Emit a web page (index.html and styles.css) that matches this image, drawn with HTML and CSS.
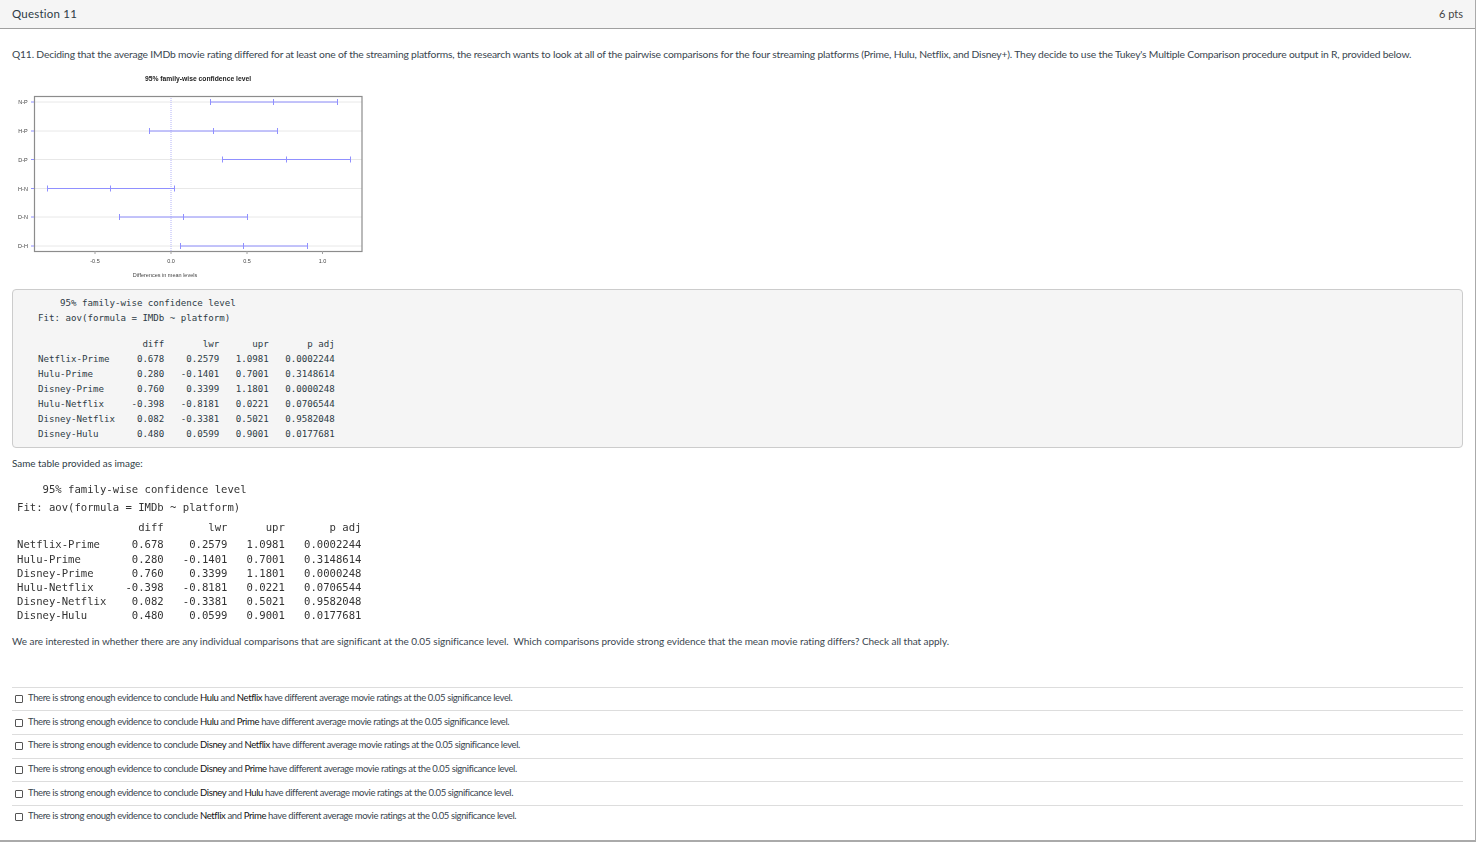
FILE: index.html
```html
<!DOCTYPE html>
<html lang="en">
<head>
<meta charset="utf-8">
<title>Question 11</title>
<link rel="stylesheet" href="styles.css">
</head>
<body>
<main class="question">
  <header class="question-header">
    <span class="question-name">Question 11</span>
    <span class="question-points">6 pts</span>
  </header>
  <section class="question-body">
    <p class="prompt">Q11. Deciding that the average IMDb movie rating differed for at least one of the streaming platforms, the research wants to look at all of the pairwise comparisons for the four streaming platforms (Prime, Hulu, Netflix, and Disney+). They decide to use the Tukey's Multiple Comparison procedure output in R, provided below.</p>
    <svg class="chart" viewBox="12 66 360 216" width="360" height="216" role="img" aria-label="95% family-wise confidence level">
      <text class="chart-title" x="198" y="81" text-anchor="middle">95% family-wise confidence level</text>
      <path class="grid" d="M34 102H362M34 131H362M34 159.500H362M34 188.500H362M34 217H362M34 246H362"/>
      <path class="zero" d="M171 96V251"/>
      <rect class="frame" x="34.500" y="96.500" width="327.500" height="155"/>
      <path class="interval" d="M31 102H34M31 131H34M31 159.500H34M31 188.500H34M31 217H34M31 246H34"/>
      <path class="interval" d="M210.500 102H337.500M210.500 99V105M273.500 99V105M337.500 99V105"/>
      <path class="interval" d="M149.500 131H277.500M149.500 128V134M213.500 128V134M277.500 128V134"/>
      <path class="interval" d="M222.500 159.500H350.500M222.500 156.500V162.500M286.500 156.500V162.500M350.500 156.500V162.500"/>
      <path class="interval" d="M47.500 188.500H174.500M47.500 185.500V191.500M110.500 185.500V191.500M174.500 185.500V191.500"/>
      <path class="interval" d="M119.500 217H247.500M119.500 214V220M183.500 214V220M247.500 214V220"/>
      <path class="interval" d="M180.500 246H307.500M180.500 243V249M243.500 243V249M307.500 243V249"/>
      <path class="tick" d="M95 251V254M171 251V254M247 251V254M322.500 251V254"/>
      <g class="chart-label">
        <text x="23" y="104" text-anchor="middle">N-P</text>
        <text x="23" y="133" text-anchor="middle">H-P</text>
        <text x="23" y="162" text-anchor="middle">D-P</text>
        <text x="23" y="191" text-anchor="middle">H-N</text>
        <text x="23" y="219" text-anchor="middle">D-N</text>
        <text x="23" y="248" text-anchor="middle">D-H</text>
        <text x="95" y="263" text-anchor="middle">-0.5</text>
        <text x="171" y="263" text-anchor="middle">0.0</text>
        <text x="247" y="263" text-anchor="middle">0.5</text>
        <text x="322.500" y="263" text-anchor="middle">1.0</text>
        <text x="165" y="277" text-anchor="middle">Differences in mean levels</text>
      </g>
    </svg>
    <div class="output-box">
      <pre class="mono-head">    95% family-wise confidence level
Fit: aov(formula = IMDb ~ platform)</pre>
      <pre class="mono-table">                   diff       lwr      upr       p adj
Netflix-Prime     0.678    0.2579   1.0981   0.0002244
Hulu-Prime        0.280   -0.1401   0.7001   0.3148614
Disney-Prime      0.760    0.3399   1.1801   0.0000248
Hulu-Netflix     -0.398   -0.8181   0.0221   0.0706544
Disney-Netflix    0.082   -0.3381   0.5021   0.9582048
Disney-Hulu       0.480    0.0599   0.9001   0.0177681</pre>
    </div>
    <p class="same-table">Same table provided as image:</p>
    <div class="output-image">
      <pre class="image-title">    95% family-wise confidence level</pre>
      <pre class="image-fit">Fit: aov(formula = IMDb ~ platform)</pre>
      <pre class="image-columns">                   diff       lwr      upr       p adj</pre>
      <pre class="image-rows">Netflix-Prime     0.678    0.2579   1.0981   0.0002244
Hulu-Prime        0.280   -0.1401   0.7001   0.3148614
Disney-Prime      0.760    0.3399   1.1801   0.0000248
Hulu-Netflix     -0.398   -0.8181   0.0221   0.0706544
Disney-Netflix    0.082   -0.3381   0.5021   0.9582048
Disney-Hulu       0.480    0.0599   0.9001   0.0177681</pre>
    </div>
    <p class="instruction">We are interested in whether there are any individual comparisons that are significant at the 0.05 significance level.  Which comparisons provide strong evidence that the mean movie rating differs? Check all that apply.</p>
    <ul class="answers">
      <li class="answer"><span class="checkbox"></span><span class="answer-text">There is strong enough evidence to conclude <b>Hulu</b> and <b>Netflix</b> have different average movie ratings at the 0.05 significance level.</span></li>
      <li class="answer"><span class="checkbox"></span><span class="answer-text">There is strong enough evidence to conclude <b>Hulu</b> and <b>Prime</b> have different average movie ratings at the 0.05 significance level.</span></li>
      <li class="answer"><span class="checkbox"></span><span class="answer-text">There is strong enough evidence to conclude <b>Disney</b> and <b>Netflix</b> have different average movie ratings at the 0.05 significance level.</span></li>
      <li class="answer"><span class="checkbox"></span><span class="answer-text">There is strong enough evidence to conclude <b>Disney</b> and <b>Prime</b> have different average movie ratings at the 0.05 significance level.</span></li>
      <li class="answer"><span class="checkbox"></span><span class="answer-text">There is strong enough evidence to conclude <b>Disney</b> and <b>Hulu</b> have different average movie ratings at the 0.05 significance level.</span></li>
      <li class="answer"><span class="checkbox"></span><span class="answer-text">There is strong enough evidence to conclude <b>Netflix</b> and <b>Prime</b> have different average movie ratings at the 0.05 significance level.</span></li>
    </ul>
  </section>
</main>
</body>
</html>
```
FILE: styles.css
```css
* { box-sizing: border-box; }
html, body { margin: 0; padding: 0; background: #fff; }
body { font-family: Lato, "Noto Sans", sans-serif; color: #2d3b45; }
p, pre, ul { margin: 0; padding: 0; }

.question {
  width: 1476px;
  height: 842px;
  border-right: 1px solid #aaa;
  border-bottom: 2px solid #aaa;
}
.question-header {
  height: 29px;
  display: flex;
  justify-content: space-between;
  align-items: center;
  padding: 0 12px 2px;
  background: #f5f5f5;
  border-bottom: 1px solid #a0a0a0;
  font-size: 11.500px;
}
.question-name { color: #2d3b45; letter-spacing: .22px; }
.question-points { color: #444; font-size: 11px; }

.question-body { padding: 0 12px; }
.prompt {
  margin-top: 18px;
  font-size: 10.300px;
  line-height: 14px;
  letter-spacing: -.18px;
  white-space: nowrap;
  color: #3a464f;
}
.chart { display: block; margin-top: 5px; filter: blur(.35px); }
.chart text { font-family: "Liberation Sans", Arial, sans-serif; }
.chart-title { font-size: 6.750px; font-weight: 700; fill: #222; }
.chart-label { font-size: 5.500px; fill: #444; }
.grid { stroke: #e8e8e8; stroke-width: 1; fill: none; }
.zero { stroke: #b4b4f8; stroke-width: 1; stroke-dasharray: 1 1; fill: none; }
.frame { stroke: #8c8c8c; stroke-width: 1.200; fill: none; }
.interval { stroke: #9090ff; stroke-width: 1; fill: none; }
.tick { stroke: #a0a0a0; stroke-width: 1; fill: none; }

.output-box {
  margin-top: 7px;
  width: 1451px;
  height: 159px;
  padding: 6px 25px;
  background: #f5f5f5;
  border: 1px solid #ccc;
  border-radius: 4px;
}
.output-box pre {
  font-family: "DejaVu Sans Mono", monospace;
  font-size: 9.150px;
  line-height: 15px;
  color: #2d3b45;
}
.mono-table { margin-top: 11px; }

.same-table {
  margin-top: 8px;
  font-size: 9.900px;
  line-height: 14px;
}
.output-image {
  margin-top: 12px;
  padding-left: 5px;
  color: #333;
  filter: blur(.25px);
}
.output-image pre {
  font-family: "DejaVu Sans Mono", monospace;
  font-size: 10.600px;
  line-height: 14.200px;
}
.image-title { height: 14px; }
.image-fit { margin-top: 4px; }
.image-columns { margin-top: 6px; }
.image-rows { margin-top: 3px; }

.instruction {
  margin-top: 11px;
  font-size: 10px;
  line-height: 14px;
  letter-spacing: -.05px;
  white-space: pre;
  color: #3a464f;
}
.answers { list-style: none; margin-top: 39px; }
.answer {
  display: flex;
  align-items: center;
  gap: 5px;
  height: 23.700px;
  padding: 0 0 3px 3px;
  border-top: 1px solid #ddd;
  font-size: 9.500px;
  white-space: nowrap;
}
.checkbox {
  flex: none;
  width: 8px;
  height: 8px;
  margin-top: 3px;
  border: 1px solid #555;
  border-radius: 1px;
  background: #fff;
}
.answer-text { letter-spacing: -.38px; color: #3a464f; }
.answer-text b { font-weight: 400; color: #111; }
```
